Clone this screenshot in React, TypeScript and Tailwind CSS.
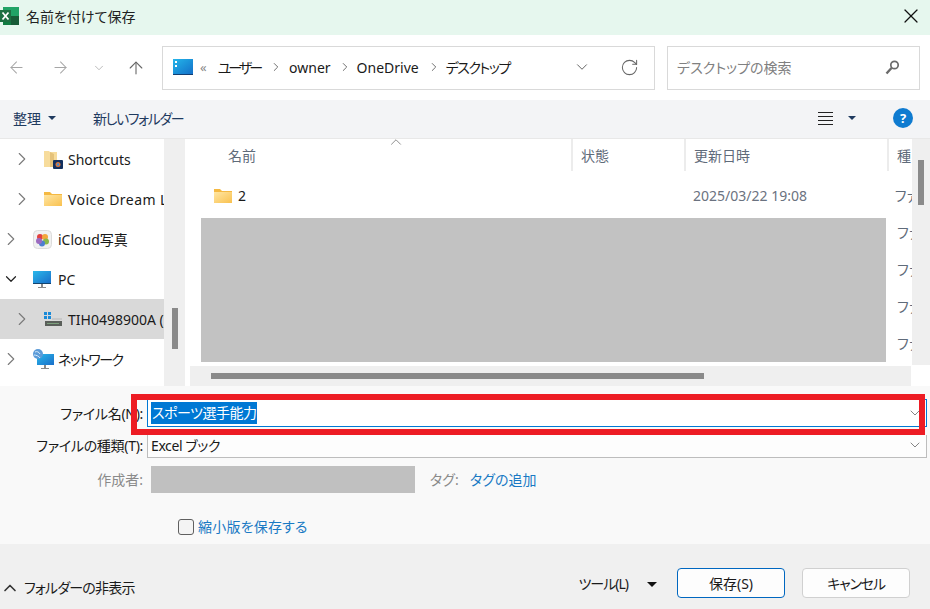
import React from "react";
import { ArrowLeft, ArrowRight, ArrowUp, ChevronDown, ChevronRight, ChevronUp, RotateCw, X } from "lucide-react";

const FONT = "font-['Noto_Sans','Noto_Sans_CJK_JP',sans-serif] [font-feature-settings:'palt']";

function Folder({ className = "" }: { className?: string }) {
  return (
    <svg viewBox="0 0 18 14" className={`shrink-0 ${className}`}>
      <defs>
        <linearGradient id="fg" x1="0" y1="0" x2="1" y2="1">
          <stop offset="0" stopColor="#ffe6a3" />
          <stop offset="1" stopColor="#f9c14f" />
        </linearGradient>
      </defs>
      <path d="M0 0h6l2 2h10v12H0z" fill="#f5b942" />
      <path d="M0 3h18v11H0z" fill="url(#fg)" />
    </svg>
  );
}

function ExcelIcon() {
  return (
    <svg viewBox="0 0 19 18" className="w-[19px] h-[18px] shrink-0">
      <rect x="3" y="0" width="16" height="18" fill="#21a366" />
      <rect x="11" y="9" width="8" height="9" fill="#185c37" />
      <rect x="3" y="13" width="8" height="5" fill="#107c41" />
      <rect x="0" y="3" width="11" height="12" fill="#1d6f42" />
      <path d="M2.500 5.500l6 7M8.500 5.500l-6 7" stroke="#fff" strokeWidth="1.800" fill="none" />
    </svg>
  );
}

function ShortcutsIcon() {
  return (
    <svg viewBox="0 0 19 19" className="w-[19px] h-[19px]">
      <path d="M0 1h5l1 1h7v15H0z" fill="#f7dc9c" />
      <path d="M6 2l4 2v13H6z" fill="#e5c27a" />
      <rect x="9" y="10" width="10" height="9" rx="1" fill="#12305f" />
      <circle cx="14" cy="14.500" r="2.500" fill="#e0763a" />
      <circle cx="14" cy="14.500" r="1.200" fill="#3f8fd8" />
    </svg>
  );
}

function CloudPhotosIcon() {
  return (
    <svg viewBox="0 0 19 19" className="w-[19px] h-[19px]">
      <rect x="0.500" y="0.500" width="18" height="18" rx="4" fill="#f1f1f1" stroke="#dcdcdc" />
      <circle cx="7" cy="7" r="3" fill="#e2403f" />
      <circle cx="12" cy="7" r="3" fill="#f3a63b" />
      <circle cx="13" cy="11.500" r="3" fill="#8ab84a" />
      <circle cx="9" cy="13.500" r="3" fill="#4c7fd0" />
      <circle cx="6" cy="11" r="3" fill="#9b6bc0" />
    </svg>
  );
}

function PcIcon() {
  return (
    <svg viewBox="0 0 18 17" className="w-[18px] h-[17px]">
      <defs>
        <linearGradient id="mg" x1="0" y1="0" x2="1" y2="1">
          <stop offset="0" stopColor="#2ab8ea" />
          <stop offset="1" stopColor="#1a6fca" />
        </linearGradient>
      </defs>
      <rect x="0" y="0" width="18" height="12" fill="url(#mg)" />
      <rect x="0" y="12" width="18" height="1" fill="#14456f" />
      <rect x="8" y="13" width="2" height="3" fill="#8a8a8a" />
      <rect x="5" y="16" width="8" height="1" fill="#8a8a8a" />
    </svg>
  );
}

function DriveIcon() {
  return (
    <svg viewBox="0 0 18 15" className="w-[18px] h-[15px]">
      <rect x="0" y="0" width="3" height="3" fill="#1a8ad8" />
      <rect x="4" y="0" width="3" height="3" fill="#1a8ad8" />
      <rect x="0" y="4" width="3" height="3" fill="#1a8ad8" />
      <rect x="4" y="4" width="3" height="3" fill="#1a8ad8" />
      <rect x="8" y="6" width="10" height="2" fill="#c8c8c8" />
      <rect x="1" y="9" width="17" height="5" fill="#5a5f5a" />
      <rect x="3" y="11" width="12" height="1" fill="#7da07d" />
    </svg>
  );
}

function NetworkIcon() {
  return (
    <svg viewBox="0 0 21 20" className="w-[21px] h-[20px] shrink-0">
      <defs>
        <linearGradient id="ng" x1="0" y1="0" x2="1" y2="1">
          <stop offset="0" stopColor="#2ab8ea" />
          <stop offset="1" stopColor="#1a6fca" />
        </linearGradient>
      </defs>
      <rect x="4" y="5" width="17" height="11" fill="url(#ng)" />
      <rect x="11" y="16" width="2" height="3" fill="#8a8a8a" />
      <rect x="8" y="19" width="8" height="1" fill="#8a8a8a" />
      <circle cx="5" cy="5" r="5" fill="#5c9bd8" />
      <path d="M2 3c2-1 4 0 5 2M1 6c2 0 5 1 6 3" stroke="#d7ebfa" fill="none" />
    </svg>
  );
}

function TreeRow({ indent, open, selected, icon, label, labelClass = "" }: { indent: boolean; open?: boolean; selected?: boolean; icon: React.ReactNode; label: string; labelClass?: string }) {
  return (
    <div className={`h-10 flex items-center whitespace-nowrap overflow-hidden ${selected ? "bg-[#d9d9d9]" : ""}`}>
      <div className={`flex items-center justify-center w-[22px] shrink-0 ${indent ? "ml-[11px]" : ""}`}>
        {open ? <ChevronDown className="w-[18px] h-[18px] text-[#222]" strokeWidth={1.6} /> : <ChevronRight className="w-[22px] h-[22px] text-[#7a7a7a]" strokeWidth={1.2} />}
      </div>
      <div className="w-[19px] h-[20px] ml-[11px] flex items-center justify-start shrink-0">{icon}</div>
      <span className={`${indent ? "ml-[5px]" : "ml-[6px]"} text-[14px] text-[#1a1a1a] ${labelClass}`}>{label}</span>
    </div>
  );
}

function ColHead({ label, w, pad }: { label: string; w: string; pad: string }) {
  return <div className={`${w} ${pad} h-[32px] border-r-2 border-[#ececec] flex items-center text-[14px] text-[#5f6b7a] shrink-0`}>{label}</div>;
}

const addrChevron = <ChevronRight className="w-[14px] h-[14px] text-[#666] shrink-0" strokeWidth={1.6} />;

export default function App() {
  return (
    <div className={`${FONT} w-[930px] h-[609px] flex flex-col overflow-hidden bg-white text-[#1a1a1a] relative`}>
      {/* title bar */}
      <div className="h-[35px] pb-[3px] bg-[#e6f7ee] flex items-center shrink-0">
        <ExcelIcon />
        <span className="ml-[7px] text-[14px] text-[#222]">名前を付けて保存</span>
        <X className="ml-auto mr-[7px] w-[24px] h-[24px] text-[#111]" strokeWidth={1.2} />
      </div>

      {/* nav */}
      <div className="h-[65px] flex items-center shrink-0 bg-white">
        <ArrowLeft className="ml-[7px] w-[19px] h-[19px] text-[#a6a6a6]" strokeWidth={1.3} />
        <ArrowRight className="ml-[25px] w-[19px] h-[19px] text-[#a6a6a6]" strokeWidth={1.3} />
        <ChevronDown className="ml-[22px] w-[14px] h-[14px] text-[#a6a6a6]" strokeWidth={1.3} />
        <ArrowUp className="ml-[20px] w-[20px] h-[20px] text-[#666]" strokeWidth={1.3} />
        <div className="ml-[16px] w-[493px] h-[44px] pb-px border border-[#d9d9d9] flex items-center whitespace-nowrap">
          <div className="ml-[10px] w-[20px] h-[16px] bg-gradient-to-br from-[#26b6ea] to-[#1670c8] border-b border-[#123e72] relative shrink-0">
            <span className="absolute left-[2px] top-[2px] w-[2px] h-[2px] bg-white" />
            <span className="absolute left-[2px] top-[6px] w-[2px] h-[2px] bg-white" />
          </div>
          <span className="ml-[7px] text-[13px] text-[#888] leading-none">«</span>
          <span className="ml-[11px] text-[14px] tracking-[-3px]">ユーザー</span>
          <span className="ml-[9px]">{addrChevron}</span>
          <span className="ml-[6px] text-[14px]">owner</span>
          <span className="ml-[7px]">{addrChevron}</span>
          <span className="ml-[5px] text-[14px]">OneDrive</span>
          <span className="ml-[8px]">{addrChevron}</span>
          <span className="ml-[5px] text-[14px] tracking-[-1.5px]">デスクトップ</span>
          <ChevronDown className="ml-auto w-[18px] h-[18px] text-[#555]" strokeWidth={1.2} />
          <RotateCw className="ml-[29px] mr-[15px] w-[19px] h-[19px] text-[#666]" strokeWidth={1.3} />
        </div>
        <div className="ml-[12px] w-[253px] h-[44px] pb-px border border-[#d9d9d9] flex items-center pl-[9px] text-[14px] text-[#808080]">
          デスクトップの検索
          <svg viewBox="0 0 15 15" className="ml-auto mr-[19px] w-[15px] h-[15px]" fill="none" stroke="#6a6a6a">
            <circle cx="9.500" cy="5" r="3.700" strokeWidth="1.700" />
            <path d="M6.500 8L1.500 13.500" strokeWidth="2.400" />
          </svg>
        </div>
      </div>

      {/* toolbar */}
      <div className="h-[39px] pb-[2px] bg-[#f3f4f6] border-b border-[#e8e8e8] flex items-center shrink-0 text-[14px] text-[#1f3a5f]">
        <span className="ml-[13px]">整理</span>
        <span className="ml-[7px] w-0 h-0 border-x-[4px] border-x-transparent border-t-[4px] border-t-[#1f3a5f]" />
        <span className="ml-[37px] tracking-[-1.4px]">新しいフォルダー</span>
        <div className="ml-auto flex flex-col gap-[3px]">
          <span className="block w-[15px] h-px bg-[#222]" />
          <span className="block w-[15px] h-px bg-[#222]" />
          <span className="block w-[15px] h-px bg-[#222]" />
          <span className="block w-[15px] h-px bg-[#222]" />
        </div>
        <span className="ml-[15px] w-0 h-0 border-x-[4px] border-x-transparent border-t-[4px] border-t-[#1f3a5f]" />
        <span className="ml-[37px] mr-[17px] w-[20px] h-[20px] rounded-full bg-[#0f7bd0] text-white text-[13px] font-bold flex items-center justify-center leading-none">?</span>
      </div>

      {/* content */}
      <div className="h-[247px] flex shrink-0 bg-white">
        <div className="w-[164px] shrink-0">
          <TreeRow indent icon={<ShortcutsIcon />} label="Shortcuts" />
          <TreeRow indent icon={<Folder className="w-[18px] h-[14px]" />} label="Voice Dream Library" labelClass="tracking-[0.45px]" />
          <TreeRow indent={false} icon={<CloudPhotosIcon />} label="iCloud写真" />
          <TreeRow indent={false} open icon={<PcIcon />} label="PC" />
          <TreeRow indent selected icon={<DriveIcon />} label="TIH0498900A (C:)" />
          <TreeRow indent={false} icon={<NetworkIcon />} label="ネットワーク" labelClass="tracking-[-1.6px]" />
        </div>
        <div className="w-[21px] shrink-0 bg-[#efefef] flex justify-center items-start">
          <div className="mt-[169px] w-[6px] h-[41px] bg-[#8a8a8a]" />
        </div>
        <div className="w-[5px] shrink-0" />
        <div className="flex-1 flex flex-col min-w-0">
          <div className="flex-1 flex min-h-0">
            <div className="flex-1 min-w-0 overflow-hidden relative">
              <div className="flex items-center h-[32px] whitespace-nowrap">
                <ColHead label="名前" w="w-[383px]" pad="pl-[38px]" />
                <ColHead label="状態" w="w-[113px]" pad="pl-[8px]" />
                <ColHead label="更新日時" w="w-[203px]" pad="pl-[8px]" />
                <div className="pl-[8px] text-[14px] text-[#5f6b7a]">種</div>
              </div>
              <ChevronUp className="absolute left-[197px] -top-[6px] w-[18px] h-[18px] text-[#777]" strokeWidth={1.1} />
              <div className="mt-[6px] flex flex-col whitespace-nowrap text-[14px]">
                <div className="h-[37px] flex items-center">
                  <Folder className="ml-[24px] w-[18px] h-[14px]" />
                  <span className="ml-[6px] shrink-0">2</span>
                  <span className="ml-[447px] shrink-0 text-[#6b7280]">2025/03/22 19:08</span>
                  <span className="ml-[88px] shrink-0 text-[#5f6b7a]">ファ</span>
                </div>
                <div className="h-[37px] pl-[707px] flex items-center text-[#5f6b7a]">ファ</div>
                <div className="h-[37px] pl-[707px] flex items-center text-[#5f6b7a]">ファ</div>
                <div className="h-[37px] pl-[707px] flex items-center text-[#5f6b7a]">ファ</div>
                <div className="h-[37px] pl-[707px] flex items-center text-[#5f6b7a]">ファ</div>
              </div>
              <div className="absolute left-[11px] top-[79px] w-[685px] h-[144px] bg-[#c2c2c2]" />
            </div>
            <div className="w-[18px] shrink-0 bg-[#efefef] flex justify-center items-start">
              <div className="mt-[21px] w-[6px] h-[45px] bg-[#8a8a8a]" />
            </div>
          </div>
          <div className="h-[20px] mr-[19px] mt-px bg-[#efefef] flex items-center shrink-0">
            <div className="ml-[21px] w-[493px] h-[6px] bg-[#8a8a8a]" />
          </div>
        </div>
      </div>

      {/* form */}
      <div className="h-[158px] bg-[#f9f9f9] shrink-0 text-[14px] pt-[13px]">
        <div className="flex items-center h-[28px]">
          <span className="w-[143px] text-right text-[#1a1a1a] whitespace-nowrap tracking-[-0.3px]">ファイル名(N):</span>
          <div className="ml-[4px] w-[780px] h-[28px] bg-white border border-[#0078d4] flex items-center pl-[3px]">
            <span className="bg-[#0078d4] text-white h-[22px] leading-[22px] px-px tracking-[-0.5px]">スポーツ選手能力</span>
            <ChevronDown className="ml-auto mr-[3px] w-[16px] h-[16px] text-[#666]" strokeWidth={1.2} />
          </div>
        </div>
        <div className="flex items-center h-[23px] mt-[8px]">
          <span className="w-[143px] pb-[2px] text-right whitespace-nowrap tracking-[-0.3px]">ファイルの種類(T):</span>
          <div className="ml-[4px] w-[780px] h-[23px] pb-[2px] bg-[#fdfdfd] border-b border-x border-[#bdbdbd] flex items-center pl-[3px] tracking-[-0.4px]">
            Excel ブック
            <ChevronDown className="ml-auto mr-[3px] w-[16px] h-[16px] text-[#666]" strokeWidth={1.2} />
          </div>
        </div>
        <div className="flex items-center h-[27px] mt-[8px]">
          <span className="w-[143px] text-right text-[#8a8a8a]">作成者:</span>
          <div className="ml-[8px] w-[264px] h-[27px] bg-[#c0c0c0]" />
          <span className="ml-[15px] w-[40px] text-[#8a8a8a]">タグ:</span>
          <span className="text-[#1a7ac4]">タグの追加</span>
        </div>
        <div className="flex items-center mt-[23px] ml-[178px]">
          <span className="w-[16px] h-[16px] rounded-[3px] border border-[#606060] bg-[#f4f4f4]" />
          <span className="ml-[4px] text-[#1a7ac4] tracking-[0.2px]">縮小版を保存する</span>
        </div>
      </div>

      {/* footer */}
      <div className="flex-1 bg-[#f0f0f0] flex items-start text-[14px]">
        <ChevronUp className="mt-[34px] w-[20px] h-[20px] text-[#333]" strokeWidth={2} />
        <span className="ml-[4px] mt-[33px] tracking-[-0.8px]">フォルダーの非表示</span>
        <span className="ml-auto mt-[29px] tracking-[-1px]">ツール(L)</span>
        <span className="ml-[19px] mt-[38px] w-0 h-0 border-x-[5px] border-x-transparent border-t-[5px] border-t-[#111]" />
        <button className="ml-[20px] mt-[24px] w-[108px] h-[30px] rounded-[4px] border border-[#0067c0] bg-[#fdfdfd] flex items-center justify-center">保存(S)</button>
        <button className="ml-[17px] mr-[20px] mt-[24px] w-[108px] h-[30px] rounded-[4px] border border-[#d0d0d0] bg-[#fdfdfd] flex items-center justify-center tracking-[-1.2px]">キャンセル</button>
      </div>

      {/* red annotation */}
      <div className="absolute left-[131px] top-[394px] w-[794px] h-[41px] border-[6px] border-[#ed1c24] pointer-events-none" />
    </div>
  );
}
